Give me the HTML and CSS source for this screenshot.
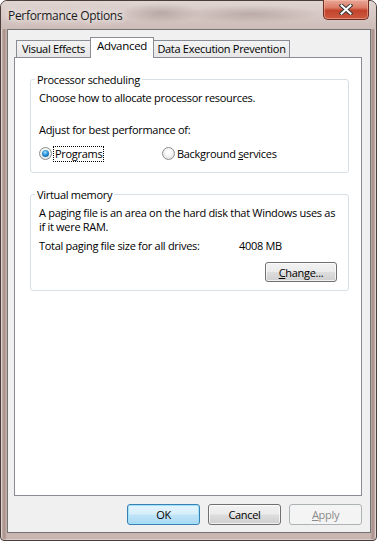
FILE: index.html
```html
<!DOCTYPE html>
<html>
<head>
    <title>Performance Options</title>
    <link rel="stylesheet" href="styles.css">
</head>
<body>
    <div class="window">
        <div class="titlebar">
            <span class="title">Performance Options</span>
            <button class="close" type="button">
                <svg width="14" height="11" viewBox="0 0 14 11">
                    <path d="M2.5 1.5 L11.5 9.5 M11.5 1.5 L2.5 9.5" stroke="#3a3a3a" stroke-width="4" stroke-linecap="square"/>
                    <path d="M2.5 1.5 L11.5 9.5 M11.5 1.5 L2.5 9.5" stroke="#ffffff" stroke-width="2" stroke-linecap="square"/>
                </svg>
            </button>
        </div>

        <div class="client">
            <div class="tabs">
                <div class="tab tab-visual">Visual Effects</div>
                <div class="tab tab-advanced active">Advanced</div>
                <div class="tab tab-dep">Data Execution Prevention</div>
            </div>

            <div class="panel">
                <fieldset class="group group-cpu">
                    <legend>Processor scheduling</legend>
                    <p class="line">Choose how to allocate processor resources.</p>
                    <p class="line adjust">Adjust for best performance of:</p>
                    <div class="radios">
                        <label class="radio-item radio-programs">
                            <span class="radio checked"></span>
                            <span class="focus">Programs</span>
                        </label>
                        <label class="radio-item">
                            <span class="radio"></span>
                            <span>Background <u>s</u>ervices</span>
                        </label>
                    </div>
                </fieldset>

                <fieldset class="group group-vm">
                    <legend>Virtual memory</legend>
                    <p class="wrap">A paging file is an area on the hard disk that Windows uses as<br>if it were RAM.</p>
                    <div class="total">
                        <span class="total-label">Total paging file size for all drives:</span>
                        <span>4008 MB</span>
                    </div>
                    <div class="change-row">
                        <button class="btn btn-change" type="button"><u>C</u>hange...</button>
                    </div>
                </fieldset>
            </div>

            <div class="buttons">
                <button class="btn default" type="button">OK</button>
                <button class="btn" type="button">Cancel</button>
                <button class="btn" type="button" disabled><u>A</u>pply</button>
            </div>
        </div>
    </div>
</body>
</html>
```

FILE: styles.css
```css
body {
    margin: 0;
    padding: 0;
    background-color: #ffffff;
    font-family: "Open Sans", "Noto Sans", sans-serif;
    font-size: 11px;
    letter-spacing: -0.3px;
    color: #000;
}
.window {
    box-sizing: border-box;
    width: 377px;
    height: 541px;
    display: flex;
    flex-direction: column;
    padding: 0 5px 7px 6px;
    border: 1px solid #4a3c39;
    border-radius: 7px 7px 4px 4px;
    background: linear-gradient(to right, #d3c2be 0px, #a88f89 3px, #c9b6b1 6px, #c9b6b1 calc(100% - 6px), #a88f89 calc(100% - 3px), #d3c2be 100%);
    box-shadow: inset 0 0 0 1px rgba(255, 255, 255, 0.35);
}
.titlebar {
    height: 28px;
    display: flex;
    align-items: flex-start;
    justify-content: space-between;
    margin: 0 -5px 0 -6px;
    padding: 0 7px 0 7px;
    border-radius: 6px 6px 0 0;
    background:
        radial-gradient(ellipse 40px 10px at 160px 12px, rgba(70, 50, 45, 0.22), transparent),
        radial-gradient(ellipse 70px 9px at 250px 13px, rgba(70, 50, 45, 0.2), transparent),
        linear-gradient(to bottom, #e0d5d2, #cdbcb7);
}
.title {
    margin-top: 7px;
    font-size: 12px;
    line-height: 15px;
    color: #1a1a1a;
    text-shadow: 0 0 6px #fff, 0 0 10px rgba(255, 255, 255, 0.9);
}
.close {
    width: 46px;
    height: 20px;
    margin-top: -1px;
    padding: 0;
    display: flex;
    align-items: center;
    justify-content: center;
    border: 1px solid #6e2d22;
    border-top: none;
    border-radius: 0 0 5px 5px;
    background: linear-gradient(to bottom, #e9a899 0%, #dc7c66 40%, #c3432c 55%, #cc5a40 100%);
    box-shadow: inset 0 0 0 1px rgba(255, 200, 180, 0.45);
}
.client {
    flex: 1;
    display: flex;
    flex-direction: column;
    padding: 7px 8px 0 6px;
    border: 1px solid #747474;
    background-color: #f0f0f0;
}
.tabs {
    height: 20px;
    display: flex;
    align-items: flex-end;
    padding-left: 2px;
}
.tab {
    box-sizing: border-box;
    height: 17px;
    line-height: 15px;
    text-align: center;
    white-space: nowrap;
    border: 1px solid #898c95;
    border-bottom: none;
    background: linear-gradient(to bottom, #f3f3f3, #e6e6e6);
}
.tab-visual {
    width: 75px;
}
.tab-advanced {
    width: 64px;
    margin-left: -1px;
}
.tab-dep {
    width: 137px;
    margin-left: -1px;
}
.tab.active {
    position: relative;
    z-index: 1;
    height: 21px;
    margin-bottom: -1px;
    padding-bottom: 3px;
    background: #ffffff;
    font-size: 11.5px;
}
.panel {
    box-sizing: border-box;
    height: 439px;
    padding: 0 12px 0 15px;
    border: 1px solid #898c95;
    background-color: #ffffff;
}
.group {
    min-width: 0;
    margin: 14px 0 0 0;
    padding: 0 8px 0 8px;
    border: 1px solid #d5dfe5;
    border-radius: 3px;
}
.group legend {
    margin-left: -4px;
    padding: 0 2px;
    line-height: 15px;
}
.line {
    margin: 0;
    line-height: 15px;
}
.group-cpu .line:first-of-type {
    margin-top: 3px;
}
.adjust {
    margin-top: 17px !important;
}
.radios {
    display: flex;
    margin-top: 9px;
    padding-bottom: 11px;
}
.radio-item {
    display: flex;
    align-items: center;
    height: 15px;
    line-height: 14px;
}
.radio-programs {
    width: 123px;
}
.radio {
    box-sizing: border-box;
    width: 13px;
    height: 13px;
    margin-right: 2px;
    display: flex;
    align-items: center;
    justify-content: center;
    border: 1px solid #8e8f8f;
    border-radius: 50%;
    background: radial-gradient(circle at 50% 40%, #ffffff 20%, #e2e2e2 80%);
}
.radio.checked::after {
    content: "";
    width: 7px;
    height: 7px;
    border-radius: 50%;
    background: radial-gradient(circle at 45% 35%, #a9e4ff 0%, #2390d6 45%, #0e4d86 100%);
}
.focus {
    outline: 1px dotted #000;
    outline-offset: 0;
    padding: 0 1px;
}
.wrap {
    margin: 4px 0 0 0;
    line-height: 14px;
    white-space: nowrap;
}
.total {
    display: flex;
    margin-top: 4px;
    line-height: 15px;
}
.total-label {
    width: 200px;
}
.change-row {
    display: flex;
    justify-content: flex-end;
    margin: 9px 3px 0 0;
    padding-bottom: 8px;
}
.btn {
    box-sizing: border-box;
    width: 73px;
    height: 21px;
    padding: 0;
    font-family: inherit;
    font-size: 11px;
    letter-spacing: inherit;
    color: #000;
    border: 1px solid #707070;
    border-radius: 3px;
    background: linear-gradient(to bottom, #f2f2f2 0%, #ebebeb 48%, #dddddd 52%, #cfcfcf 100%);
    box-shadow: inset 0 0 0 1px rgba(255, 255, 255, 0.7);
}
.btn-change {
    width: 72px;
    height: 20px;
}
.btn.default {
    border-color: #3c7fb1;
    background: linear-gradient(to bottom, #e5f4fc 0%, #d6eefb 48%, #bfe4f8 52%, #a9d9f3 100%);
    box-shadow: inset 0 0 0 1px #9ce3fb;
}
.btn:disabled {
    color: #8a8a8a;
    border-color: #adb2b5;
    background: #f4f4f4;
    box-shadow: none;
}
.buttons {
    display: flex;
    justify-content: flex-end;
    gap: 8px;
    margin-top: 8px;
}
```
